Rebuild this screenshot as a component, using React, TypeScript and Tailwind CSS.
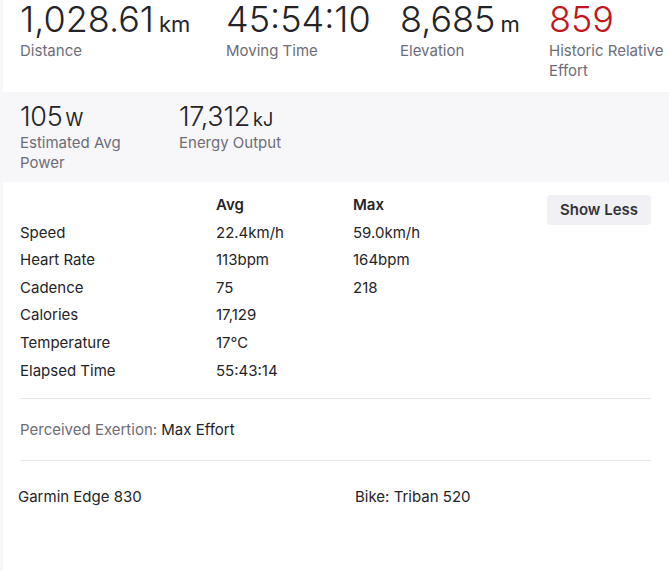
import React from 'react';

type Stat = { value: string; unit?: string; label: string; width: string; red?: boolean };

const topStats: Stat[] = [
    { value: '1,028.61', unit: 'km', label: 'Distance', width: 'w-[206px]' },
    { value: '45:54:10', label: 'Moving Time', width: 'w-[174px]' },
    { value: '8,685', unit: 'm', label: 'Elevation', width: 'w-[149px]' },
    { value: '859', label: 'Historic Relative Effort', width: 'w-[120px]', red: true },
];

const bandStats: Stat[] = [
    { value: '105', unit: 'W', label: 'Estimated Avg Power', width: 'w-[159px] pr-[30px]' },
    { value: '17,312', unit: 'kJ', label: 'Energy Output', width: 'w-[159px] pr-[10px]' },
];

const rows: [string, string, string][] = [
    ['Speed', '22.4km/h', '59.0km/h'],
    ['Heart Rate', '113bpm', '164bpm'],
    ['Cadence', '75', '218'],
    ['Calories', '17,129', ''],
    ['Temperature', '17\u2103', ''],
    ['Elapsed Time', '55:43:14', ''],
];

export default function App() {
    return (
        <div className="min-h-screen bg-[#f7f7fa] pl-[3px] font-['Inter',sans-serif] text-[#242428]">
            <div className="bg-white min-h-[571px]">
                {/* headline stats */}
                <div className="flex h-[92px] pl-[17px]">
                    {topStats.map((s) => (
                        <div key={s.label} className={`${s.width} shrink-0`}>
                            <div className={`h-[38px] leading-[38px] whitespace-nowrap ${s.red ? 'text-[#c4151c]' : ''}`}>
                                <span className="inline-block text-[36px] leading-[38px] font-light">{s.value}</span>
                                {s.unit && <span className="inline-block text-[22px] leading-[22px] ml-[5px]">{s.unit}</span>}
                            </div>
                            <div className="text-[15px] leading-[20px] text-[#6d6d78] mt-[3px]">{s.label}</div>
                        </div>
                    ))}
                </div>

                {/* secondary stats */}
                <div className="flex h-[90px] bg-[#f7f7fa] -ml-[3px] pl-[20px] pt-[10px]">
                    {bandStats.map((s) => (
                        <div key={s.label} className={s.width}>
                            <div className="h-[30px] leading-[30px] whitespace-nowrap">
                                <span className="text-[27px] font-light tracking-[-0.3px]">{s.value}</span>
                                {s.unit && <span className="text-[18px] ml-[3px]">{s.unit}</span>}
                            </div>
                            <div className="text-[15px] leading-[20px] text-[#6d6d78] mt-[1px]">{s.label}</div>
                        </div>
                    ))}
                </div>

                {/* more stats table */}
                <div className="flex pl-[17px] pr-[18px] pt-[9px]">
                    <div className="flex-1 text-[15px]">
                        <div className="flex h-[28px] items-center font-semibold">
                            <div className="w-[196px]" />
                            <div className="w-[137px]">Avg</div>
                            <div>Max</div>
                        </div>
                        {rows.map(([label, avg, max]) => (
                            <div key={label} className="flex h-[27.6px] items-center">
                                <div className="w-[196px]">{label}</div>
                                <div className="w-[137px]">{avg}</div>
                                <div>{max}</div>
                            </div>
                        ))}
                    </div>
                    <button className="mt-[4px] h-[30px] w-[104px] rounded-[4px] bg-[#f0f0f5] text-[15px] font-semibold text-[#333338]">
                        Show Less
                    </button>
                </div>

                <div className="ml-[17px] mr-[18px] mt-[13px] border-t border-[#e6e6eb]" />

                <div className="pl-[17px] pt-[21px] text-[15px] leading-[20px]">
                    <span className="text-[#6d6d78]">Perceived Exertion: </span>
                    <span>Max Effort</span>
                </div>

                <div className="ml-[17px] mr-[18px] mt-[20px] border-t border-[#e6e6eb]" />

                <div className="flex pl-[15px] pt-[26px] text-[15px] leading-[20px]">
                    <div className="w-[337px]">Garmin Edge 830</div>
                    <div>Bike: Triban 520</div>
                </div>
            </div>
        </div>
    );
}
